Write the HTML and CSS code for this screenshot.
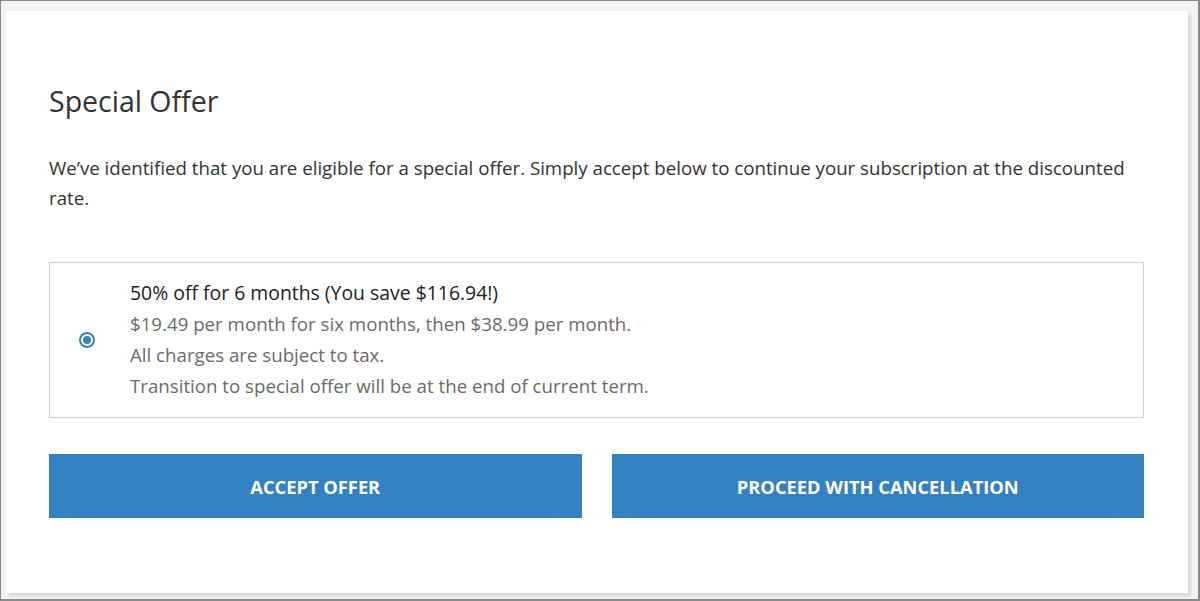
FILE: index.html
```html
<!DOCTYPE html>
<html lang="en">
<head>
<meta charset="utf-8">
<title>Special Offer</title>
<link rel="stylesheet" href="styles.css">
</head>
<body>
<div class="frame">
  <div class="card">
    <h1 class="title">Special Offer</h1>
    <p class="intro">We’ve identified that you are eligible for a special offer. Simply accept below to continue your subscription at the discounted rate.</p>
    <label class="option">
      <span class="radio"><span class="dot"></span></span>
      <span class="option-text">
        <span class="option-head">50% off for 6 months (You save $116.94!)</span>
        <span class="option-line">$19.49 per month for six months, then $38.99 per month.</span>
        <span class="option-line">All charges are subject to tax.</span>
        <span class="option-line">Transition to special offer will be at the end of current term.</span>
      </span>
    </label>
    <div class="actions">
      <button class="btn">ACCEPT OFFER</button>
      <button class="btn">PROCEED WITH CANCELLATION</button>
    </div>
  </div>
</div>
</body>
</html>
```
FILE: styles.css
```css
html, body {
  margin: 0;
  padding: 0;
}
body {
  width: 1200px;
  height: 601px;
  overflow: hidden;
  font-family: "Open Sans", "Noto Sans", sans-serif;
}
.frame {
  box-sizing: border-box;
  width: 1200px;
  height: 601px;
  border: 1px solid #8a8a8a;
  border-right-width: 2px;
  border-bottom-width: 2px;
  background: #f3f3f3;
  padding: 10px 0 0 5px;
}
.card {
  box-sizing: border-box;
  width: 1182px;
  height: 582px;
  background: #fff;
  box-shadow: 3px 3px 3px rgba(0,0,0,0.12);
  padding: 73px 44px 0 43px;
}
.title {
  margin: 0;
  font-size: 28.5px;
  font-weight: 400;
  line-height: 34px;
  color: #333;
}
.intro {
  margin: 35px 0 0;
  font-size: 18.7px;
  line-height: 30px;
  color: #333;
}
.option {
  display: flex;
  align-items: center;
  margin-top: 49px;
  height: 156px;
  box-sizing: border-box;
  border: 1px solid #cfcfcf;
  padding-bottom: 2px;
}
.radio {
  box-sizing: border-box;
  width: 16px;
  height: 16px;
  margin-left: 29px;
  margin-top: 2px;
  border: 2px solid #3a82c4;
  border-radius: 50%;
  display: flex;
  align-items: center;
  justify-content: center;
}
.dot {
  width: 8px;
  height: 8px;
  border-radius: 50%;
  background: #3a82c4;
}
.option-text {
  display: flex;
  flex-direction: column;
  margin-left: 35px;
  font-size: 18.7px;
  line-height: 31px;
  color: #6b6b6b;
}
.option-head {
  color: #222;
  font-size: 19.4px;
  font-weight: 500;
}
.actions {
  display: grid;
  grid-template-columns: 1fr 1fr;
  gap: 30px;
  margin-top: 36px;
}
.btn {
  height: 64px;
  border: 0;
  background: #3481c1;
  color: #fff;
  font-family: inherit;
  font-size: 18.3px;
  font-weight: 700;
  letter-spacing: 0;
}
```
